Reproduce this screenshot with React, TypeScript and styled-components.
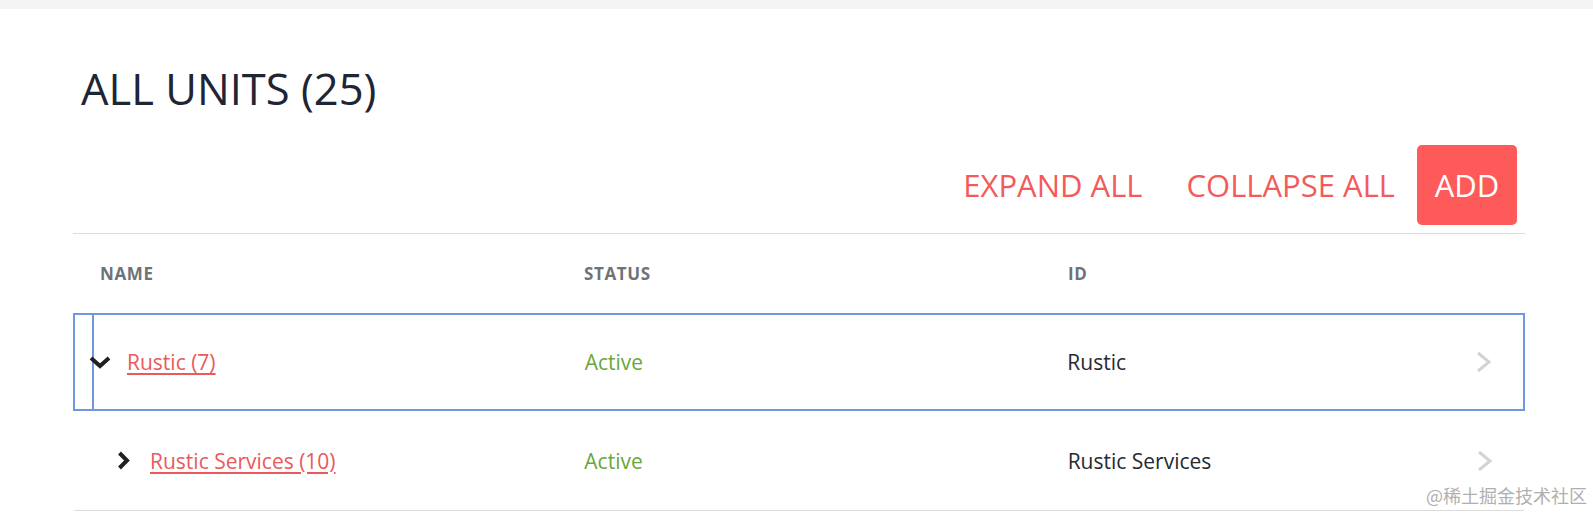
import React from 'react';
import styled, { createGlobalStyle } from 'styled-components';

const GlobalStyle = createGlobalStyle`
  html, body {
    margin: 0;
    padding: 0;
    background: #ffffff;
    font-family: 'Open Sans', 'Noto Sans', sans-serif;
  }
`;

const Page = styled.div`
  position: relative;
  width: 1593px;
  height: 513px;
  overflow: hidden;
  background: #ffffff;
`;

const TopStrip = styled.div`
  height: 9px;
  background: #f4f4f4;
`;

const Content = styled.div`
  padding: 0 68px 0 73px;
`;

const Title = styled.h1`
  margin: 56px 0 0 8px;
  font-size: 43.5px;
  line-height: 48px;
  font-weight: 400;
  color: #1e2535;
`;

const Toolbar = styled.div`
  display: flex;
  justify-content: flex-end;
  align-items: center;
  margin-top: 32px;
  padding: 0 8px 8px 0;
  border-bottom: 1px solid #dcdcdc;
`;

const TextButton = styled.button`
  height: 80px;
  padding: 0 22px;
  border: none;
  background: transparent;
  font-family: 'Open Sans', sans-serif;
  font-size: 31px;
  font-weight: 400;
  color: #f35b5b;
  cursor: pointer;
`;

const AddButton = styled(TextButton)`
  width: 100px;
  padding: 0;
  border-radius: 5px;
  background: #ff5a5a;
  color: #ffffff;
`;

const HeaderRow = styled.div`
  display: grid;
  grid-template-columns: repeat(3, 1fr);
  align-items: center;
  height: 79px;
`;

const HeaderCell = styled.div`
  padding-left: 27px;
  font-size: 17px;
  font-weight: 700;
  letter-spacing: 0.6px;
  color: #6e7279;
`;

const Row = styled.div<{ $selected?: boolean }>`
  position: relative;
  display: grid;
  grid-template-columns: repeat(3, 1fr);
  align-items: center;
  box-sizing: border-box;
  height: ${p => (p.$selected ? '98px' : '100px')};
  border: ${p => (p.$selected ? '2px solid #6f98e0' : 'none')};
  border-bottom: ${p => (p.$selected ? '2px solid #6f98e0' : '1px solid #dcdcdc')};
  margin: ${p => (p.$selected ? '0' : '0 1px')};

  &::before {
    content: '';
    display: ${p => (p.$selected ? 'block' : 'none')};
    position: absolute;
    top: 0;
    bottom: 0;
    left: 17px;
    width: 2px;
    background: #6f98e0;
  }
`;

const NameCell = styled.div<{ $level: number }>`
  display: flex;
  align-items: center;
  padding-left: ${p => 14 + p.$level * 24}px;
`;

const Toggle = styled.span`
  position: relative;
  display: flex;
  align-items: center;
  justify-content: center;
  width: 22px;
  height: 22px;
  margin-right: 16px;
`;

const UnitLink = styled.a`
  font-size: 21px;
  color: #ea5a5c;
  text-decoration: underline;
  text-underline-offset: 3px;
`;

const Cell = styled.div`
  padding-left: 27px;
  font-size: 21px;
`;

const Status = styled(Cell)`
  color: #68a83a;
`;

const IdCell = styled(Cell)`
  display: flex;
  align-items: center;
  justify-content: space-between;
  padding-right: 31px;
  color: #262a30;
`;

const Watermark = styled.div`
  position: absolute;
  right: 6px;
  bottom: 5px;
  font-family: 'Noto Sans CJK SC', sans-serif;
  font-size: 18px;
  color: #b0b0b0;
`;

const ChevronDown = () => (
  <svg width="22" height="13" viewBox="0 0 22 13">
    <polyline points="2,2 11,10 20,2" fill="none" stroke="#1f2124" strokeWidth="4" />
  </svg>
);

const ChevronRight = () => (
  <svg width="13" height="19" viewBox="0 0 13 19">
    <polyline points="2.5,2 10,9.5 2.5,17" fill="none" stroke="#1f2124" strokeWidth="4" />
  </svg>
);

const RowArrow = () => (
  <svg width="16" height="22" viewBox="0 0 16 22">
    <polyline points="2,2 13,11 2,20" fill="none" stroke="#d3d3d3" strokeWidth="3" />
  </svg>
);

const units = [
  { name: 'Rustic (7)', id: 'Rustic', status: 'Active', level: 0, open: true, selected: true },
  { name: 'Rustic Services (10)', id: 'Rustic Services', status: 'Active', level: 1, open: false, selected: false },
];

export default function App() {
  return (
    <Page>
      <GlobalStyle />
      <TopStrip />
      <Content>
        <Title>ALL UNITS (25)</Title>
        <Toolbar>
          <TextButton>EXPAND ALL</TextButton>
          <TextButton>COLLAPSE ALL</TextButton>
          <AddButton>ADD</AddButton>
        </Toolbar>
        <HeaderRow>
          <HeaderCell>NAME</HeaderCell>
          <HeaderCell>STATUS</HeaderCell>
          <HeaderCell>ID</HeaderCell>
        </HeaderRow>
        {units.map(u => (
          <Row key={u.id} $selected={u.selected}>
            <NameCell $level={u.level}>
              <Toggle>{u.open ? <ChevronDown /> : <ChevronRight />}</Toggle>
              <UnitLink href="#">{u.name}</UnitLink>
            </NameCell>
            <Status>{u.status}</Status>
            <IdCell>
              <span>{u.id}</span>
              <RowArrow />
            </IdCell>
          </Row>
        ))}
      </Content>
      <Watermark>@稀土掘金技术社区</Watermark>
    </Page>
  );
}
